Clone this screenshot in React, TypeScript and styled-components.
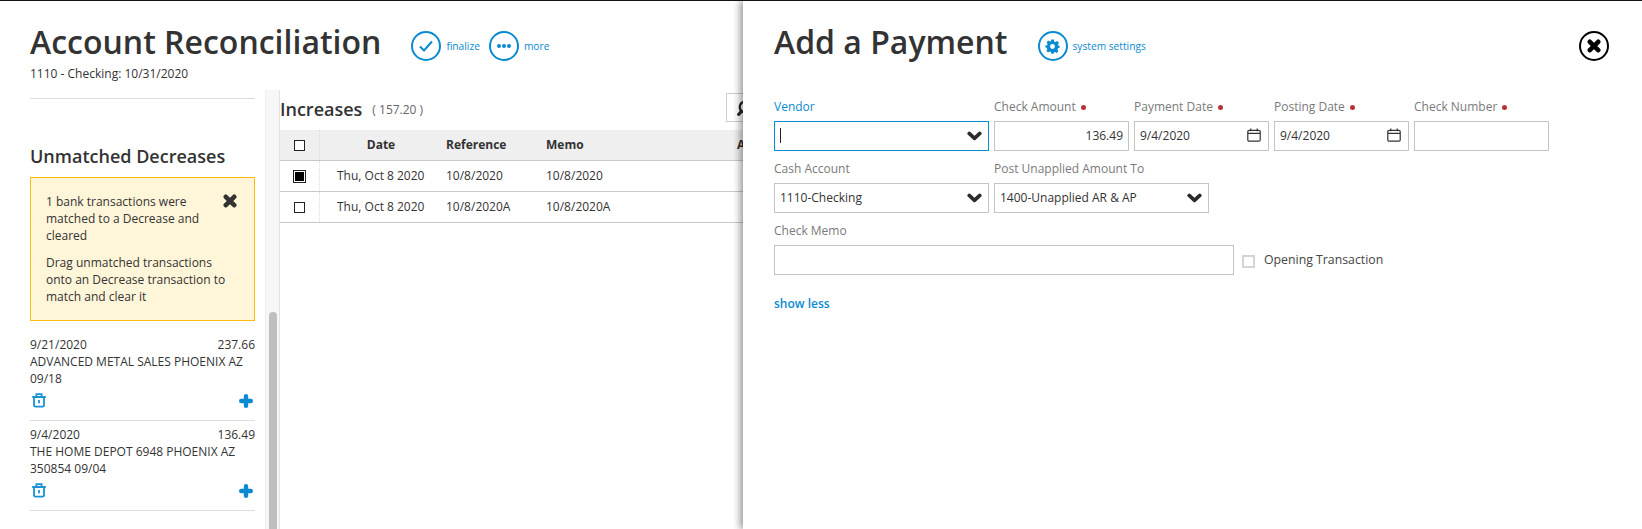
import React from "react";
import styled, { createGlobalStyle } from "styled-components";

const Global = createGlobalStyle`
  html, body { margin: 0; padding: 0; background: #fff; }
  body { font-family: "Open Sans", "Liberation Sans", sans-serif; color: #333; }
  * { box-sizing: border-box; }
`;

const BLUE = "#0a8ad0";

const Page = styled.div`
  position: relative;
  width: 1642px;
  height: 529px;
  overflow: hidden;
  border-top: 1px solid #111;
`;
const TopAccent = styled.div`
  position: absolute;
  top: -1px;
  left: 1559px;
  width: 54px;
  height: 1px;
  background: #0a7fb5;
  z-index: 3;
`;
const Header = styled.header`
  height: 89px;
  padding: 22px 0 0 30px;
`;
const TitleRow = styled.div`
  display: flex;
  align-items: center;
  height: 47px;
`;
const Title = styled.h1`
  margin: 0;
  padding-bottom: 10px;
  font-size: 32px;
  line-height: 47px;
  font-weight: 600;
  color: #333;
  white-space: nowrap;
`;
const Actions = styled.div`
  display: flex;
  align-items: center;
  gap: 9px;
  margin-left: 30px;
  margin-top: -1px;
`;
const Action = styled.a`
  display: flex;
  align-items: center;
  gap: 5px;
  font-size: 10.2px;
  color: ${BLUE};
  white-space: nowrap;
`;
const Circle = styled.span<{ $color?: string }>`
  display: flex;
  align-items: center;
  justify-content: center;
  width: 30px;
  height: 30px;
  border-radius: 50%;
  border: 2px solid ${(p) => p.$color || BLUE};
  color: ${(p) => p.$color || BLUE};
  flex: none;
`;
const Subtitle = styled.div`
  font-size: 12px;
  line-height: 16px;
  margin-top: -4px;
  color: #333;
`;
const Body = styled.div`
  display: flex;
  height: 439px;
`;
const Sidebar = styled.aside`
  width: 265px;
  padding: 8px 10px 0 30px;
  flex: none;
  overflow: hidden;
`;
const Divider = styled.div`
  height: 1px;
  background: #ddd;
`;
const SideTitle = styled.h2`
  margin: 44px 0 0;
  font-size: 18px;
  line-height: 26px;
  font-weight: 600;
  color: #333;
`;
const Notice = styled.div`
  position: relative;
  margin-top: 8px;
  height: 144px;
  padding: 15px 15px;
  background: #fff5d8;
  border: 1px solid #fdbb10;
  font-size: 12px;
  line-height: 17px;
  color: #333;
`;
const NoticeText = styled.p`
  margin: 0 0 10px;
  width: 182px;
`;
const NoticeClose = styled.span`
  position: absolute;
  right: 17px;
  top: 16px;
  display: flex;
  color: #333;
`;
const Tx = styled.div`
  height: 90px;
  border-bottom: 1px solid #ddd;
  font-size: 12px;
  line-height: 17px;
  padding-top: 5px;
  color: #333;
`;
const TxFirst = styled(Tx)`
  height: 100px;
  padding-top: 15px;
`;
const TxTop = styled.div`
  display: flex;
  justify-content: space-between;
`;
const TxIcons = styled.div`
  display: flex;
  justify-content: space-between;
  align-items: center;
  margin-top: 6px;
  padding-left: 2px;
  color: #1a92d6;
`;
const Track = styled.div`
  position: relative;
  width: 15px;
  flex: none;
  background: #f7f7f7;
  border-right: 1px solid #e2e2e2;
  border-left: 1px solid #eee;
`;
const Thumb = styled.div`
  position: absolute;
  left: 3px;
  width: 8px;
  top: 222px;
  bottom: 0;
  border-radius: 4px 4px 0 0;
  background: #bfbfbf;
`;
const Main = styled.main`
  flex: 1;
  min-width: 0;
`;
const MainHead = styled.div`
  display: flex;
  align-items: center;
  height: 40px;
  padding-bottom: 2px;
  position: relative;
`;
const MainTitle = styled.h2`
  margin: 0;
  font-size: 18px;
  font-weight: 600;
  color: #333;
`;
const MainTotal = styled.span`
  margin-left: 10px;
  font-size: 12px;
  color: #666;
`;
const SearchBtn = styled.button`
  position: absolute;
  left: 446px;
  top: 3px;
  width: 40px;
  height: 29px;
  border: 1px solid #ccc;
  background: #fff;
  padding: 0;
  display: flex;
  align-items: center;
  justify-content: center;
  color: #222;
`;
const Row = styled.div<{ $head?: boolean }>`
  display: grid;
  grid-template-columns: 40px 122px 100px 195px 1fr;
  align-items: center;
  height: 31px;
  background: ${(p) => (p.$head ? "#efefef" : "#fff")};
  border-bottom: 1px solid #c9c9c9;
  font-size: 12px;
  font-weight: ${(p) => (p.$head ? 700 : 400)};
  color: #333;
`;
const CheckCell = styled.div`
  height: 100%;
  display: flex;
  align-items: center;
  justify-content: center;
  border-right: 1px dotted #ddd;
`;
const Cell = styled.div<{ $center?: boolean; $inset?: number }>`
  padding-left: ${(p) => p.$inset ?? 4}px;
  margin-bottom: 2px;
  text-align: ${(p) => (p.$center ? "center" : "left")};
  white-space: nowrap;
`;
const Box = styled.span<{ $checked?: boolean }>`
  display: flex;
  align-items: center;
  justify-content: center;
  width: ${(p) => (p.$checked ? 13 : 11)}px;
  height: ${(p) => (p.$checked ? 13 : 11)}px;
  border: 1px solid #222;
  background: #fff;
  &::after {
    content: "";
    display: ${(p) => (p.$checked ? "block" : "none")};
    width: 9px;
    height: 9px;
    background: #000;
  }
`;
const Panel = styled.section`
  position: absolute;
  top: 0;
  left: 743px;
  right: 0;
  bottom: 0;
  background: #fff;
  box-shadow: -3px 0 7px rgba(0, 0, 0, 0.4);
  padding: 22px 0 0 31px;
  z-index: 2;
`;
const PanelHead = styled.div`
  display: flex;
  align-items: center;
  height: 47px;
  margin-bottom: 28px;
`;
const PanelActions = styled(Actions)`
  margin-left: 30px;
`;
const CloseBtn = styled.span`
  position: absolute;
  left: 836px;
  top: 30px;
`;
const FormRow = styled.div`
  display: flex;
  gap: 5px;
  margin-bottom: 9px;
  align-items: flex-end;
`;
const Field = styled.div<{ $w: number }>`
  width: ${(p) => p.$w}px;
  flex: none;
`;
const Label = styled.label<{ $active?: boolean; $req?: boolean }>`
  display: block;
  height: 18px;
  margin-bottom: 5px;
  font-size: 12px;
  line-height: 18px;
  color: ${(p) => (p.$active ? BLUE : "#7a7a7a")};
  white-space: nowrap;
  ${(p) =>
    p.$req
      ? `&::after {
    content: "";
    display: inline-block;
    width: 5px;
    height: 5px;
    border-radius: 50%;
    background: #b83232;
    margin-left: 5px;
    vertical-align: 1px;
  }`
      : ""}
`;
const Input = styled.div<{ $focus?: boolean; $right?: boolean }>`
  position: relative;
  display: flex;
  align-items: center;
  justify-content: ${(p) => (p.$right ? "flex-end" : "space-between")};
  height: 30px;
  padding: 0 5px 2px;
  border: 1px solid ${(p) => (p.$focus ? BLUE : "#c4c4c4")};
  background: #fff;
  font-size: 12px;
  color: #333;
  white-space: nowrap;
`;
const Caret = styled.span`
  width: 1px;
  height: 15px;
  background: #222;
`;
const Check = styled.span`
  width: 13px;
  height: 13px;
  border: 2px solid #d4d4d4;
  margin: 3px 9px 0 3px;
  flex: none;
`;
const CheckRow = styled.div`
  display: flex;
  align-items: center;
  height: 30px;
  padding-bottom: 1px;
  font-size: 12.3px;
  color: #444;
`;
const ShowLess = styled.a`
  display: block;
  margin-top: 20px;
  font-size: 12px;
  font-weight: 600;
  color: ${BLUE};
`;

const Chevron = () => (
  <svg width="15" height="10" viewBox="0 0 15 10" style={{ marginRight: 1, marginTop: 2 }}>
    <path d="M2.2 2.4 L7.5 7.4 L12.8 2.4" fill="none" stroke="#2b2b2b" strokeWidth="3.6" strokeLinecap="round" strokeLinejoin="round" />
  </svg>
);
const Calendar = () => (
  <svg width="14" height="14" viewBox="0 0 14 14" fill="none" stroke="#333" strokeWidth="1.2" style={{ marginRight: 2 }}>
    <rect x="0.8" y="2.4" width="12.4" height="10.8" rx="1.2" />
    <path d="M0.8 5.4 H13.2 M3.8 0.5 V3.2 M10.2 0.5 V3.2" />
  </svg>
);
const Trash = () => (
  <svg width="14" height="15" viewBox="0 0 14 15" fill="none" stroke="currentColor" strokeWidth="1.8">
    <path d="M0.2 4 H13.8 M4.4 3.8 V1.2 H9.6 V3.8" />
    <path d="M2 5 V12 Q2 13.6 3.6 13.6 H10.4 Q12 13.6 12 12 V5" />
    <path d="M7 7 V10.2" />
  </svg>
);
const Plus = () => (
  <svg width="14" height="14" viewBox="0 0 14 14" style={{ marginRight: 2 }}>
    <path d="M7 2.2 V11.8 M2.2 7 H11.8" stroke="#0a8ad0" strokeWidth="4.4" strokeLinecap="round" />
  </svg>
);
const Cross = () => (
  <svg width={14} height={14} viewBox="0 0 14 14">
    <path d="M2.8 2.8 L11.2 11.2 M11.2 2.8 L2.8 11.2" stroke="currentColor" strokeWidth="4.6" strokeLinecap="round" />
  </svg>
);
const Tick = () => (
  <svg width="16" height="14" viewBox="0 0 16 14">
    <path d="M2 7.5 L6 11.5 L14 2.5" fill="none" stroke={BLUE} strokeWidth="2" />
  </svg>
);
const Dots = () => (
  <svg width="16" height="6" viewBox="0 0 16 6" fill={BLUE}>
    <circle cx="3" cy="3" r="2" />
    <circle cx="8" cy="3" r="2" />
    <circle cx="13" cy="3" r="2" />
  </svg>
);
const Gear = () => (
  <svg width="15" height="15" viewBox="0 0 16 16">
    <path
      fill={BLUE}
      fillRule="evenodd"
      d="M6.6 0.6 H9.4 L9.8 2.6 L11.3 3.3 L13 2.2 L14.9 4.1 L13.8 5.8 L14.4 7.2 L15.6 7.6 V9.4 L13.9 9.8 L13.3 11.3 L14.3 13 L12.4 14.9 L10.7 13.8 L9.5 14.3 L9.2 15.6 H6.8 L6.4 13.9 L5 13.3 L3.2 14.4 L1.4 12.5 L2.5 10.8 L1.9 9.4 L0.4 9 V7 L2.2 6.6 L2.8 5.2 L1.7 3.5 L3.6 1.6 L5.3 2.7 L6.4 2.3 Z M8 5.4 A2.6 2.6 0 1 0 8 10.6 A2.6 2.6 0 1 0 8 5.4 Z"
    />
  </svg>
);
const Search = () => (
  <svg width="18" height="18" viewBox="0 0 18 18" fill="none" stroke="currentColor" strokeWidth="2.2">
    <circle cx="8.2" cy="8" r="5.5" />
    <path d="M4 12.8 L1.6 15.4" strokeLinecap="round" strokeWidth="3" />
  </svg>
);

const Transaction = ({ first, date, amount, lines }: { first?: boolean; date: string; amount: string; lines: string[] }) => {
  const Wrap = first ? TxFirst : Tx;
  return (
    <Wrap>
      <TxTop>
        <span>{date}</span>
        <span>{amount}</span>
      </TxTop>
      {lines.map((l) => (
        <div key={l}>{l}</div>
      ))}
      <TxIcons>
        <Trash />
        <Plus />
      </TxIcons>
    </Wrap>
  );
};

export default function App() {
  return (
    <Page>
      <Global />
      <TopAccent />
      <Header>
        <TitleRow>
          <Title>Account Reconciliation</Title>
          <Actions>
            <Action>
              <Circle><Tick /></Circle>
              finalize
            </Action>
            <Action>
              <Circle><Dots /></Circle>
              more
            </Action>
          </Actions>
        </TitleRow>
        <Subtitle>1110 - Checking: 10/31/2020</Subtitle>
      </Header>
      <Body>
        <Sidebar>
          <Divider />
          <SideTitle>Unmatched Decreases</SideTitle>
          <Notice>
            <NoticeText>1 bank transactions were matched to a Decrease and cleared</NoticeText>
            <NoticeText>Drag unmatched transactions onto an Decrease transaction to match and clear it</NoticeText>
            <NoticeClose><Cross /></NoticeClose>
          </Notice>
          <Transaction first date="9/21/2020" amount="237.66" lines={["ADVANCED METAL SALES PHOENIX AZ", "09/18"]} />
          <Transaction date="9/4/2020" amount="136.49" lines={["THE HOME DEPOT 6948 PHOENIX AZ", "350854 09/04"]} />
        </Sidebar>
        <Track><Thumb /></Track>
        <Main>
          <MainHead>
            <MainTitle>Increases</MainTitle>
            <MainTotal>( 157.20 )</MainTotal>
            <SearchBtn aria-label="search"><Search /></SearchBtn>
          </MainHead>
          <Row $head>
            <CheckCell><Box /></CheckCell>
            <Cell $center $inset={0}>Date</Cell>
            <Cell>Reference</Cell>
            <Cell>Memo</Cell>
            <Cell $inset={0}>Amount</Cell>
          </Row>
          <Row>
            <CheckCell><Box $checked /></CheckCell>
            <Cell $inset={17}>Thu, Oct 8 2020</Cell>
            <Cell>10/8/2020</Cell>
            <Cell>10/8/2020</Cell>
            <Cell />
          </Row>
          <Row>
            <CheckCell><Box /></CheckCell>
            <Cell $inset={17}>Thu, Oct 8 2020</Cell>
            <Cell>10/8/2020A</Cell>
            <Cell>10/8/2020A</Cell>
            <Cell />
          </Row>
        </Main>
      </Body>
      <Panel>
        <PanelHead>
          <Title>Add a Payment</Title>
          <PanelActions>
            <Action>
              <Circle><Gear /></Circle>
              system settings
            </Action>
          </PanelActions>
        </PanelHead>
        <CloseBtn>
          <Circle $color="#000"><Cross /></Circle>
        </CloseBtn>
        <FormRow>
          <Field $w={215}>
            <Label $active>Vendor</Label>
            <Input $focus><Caret /><Chevron /></Input>
          </Field>
          <Field $w={135}>
            <Label $req>Check Amount</Label>
            <Input $right>136.49</Input>
          </Field>
          <Field $w={135}>
            <Label $req>Payment Date</Label>
            <Input>9/4/2020<Calendar /></Input>
          </Field>
          <Field $w={135}>
            <Label $req>Posting Date</Label>
            <Input>9/4/2020<Calendar /></Input>
          </Field>
          <Field $w={135}>
            <Label $req>Check Number</Label>
            <Input />
          </Field>
        </FormRow>
        <FormRow>
          <Field $w={215}>
            <Label>Cash Account</Label>
            <Input>1110-Checking<Chevron /></Input>
          </Field>
          <Field $w={215}>
            <Label>Post Unapplied Amount To</Label>
            <Input>1400-Unapplied AR &amp; AP<Chevron /></Input>
          </Field>
        </FormRow>
        <FormRow>
          <Field $w={460}>
            <Label>Check Memo</Label>
            <Input />
          </Field>
          <CheckRow>
            <Check />
            Opening Transaction
          </CheckRow>
        </FormRow>
        <ShowLess>show less</ShowLess>
      </Panel>
    </Page>
  );
}
